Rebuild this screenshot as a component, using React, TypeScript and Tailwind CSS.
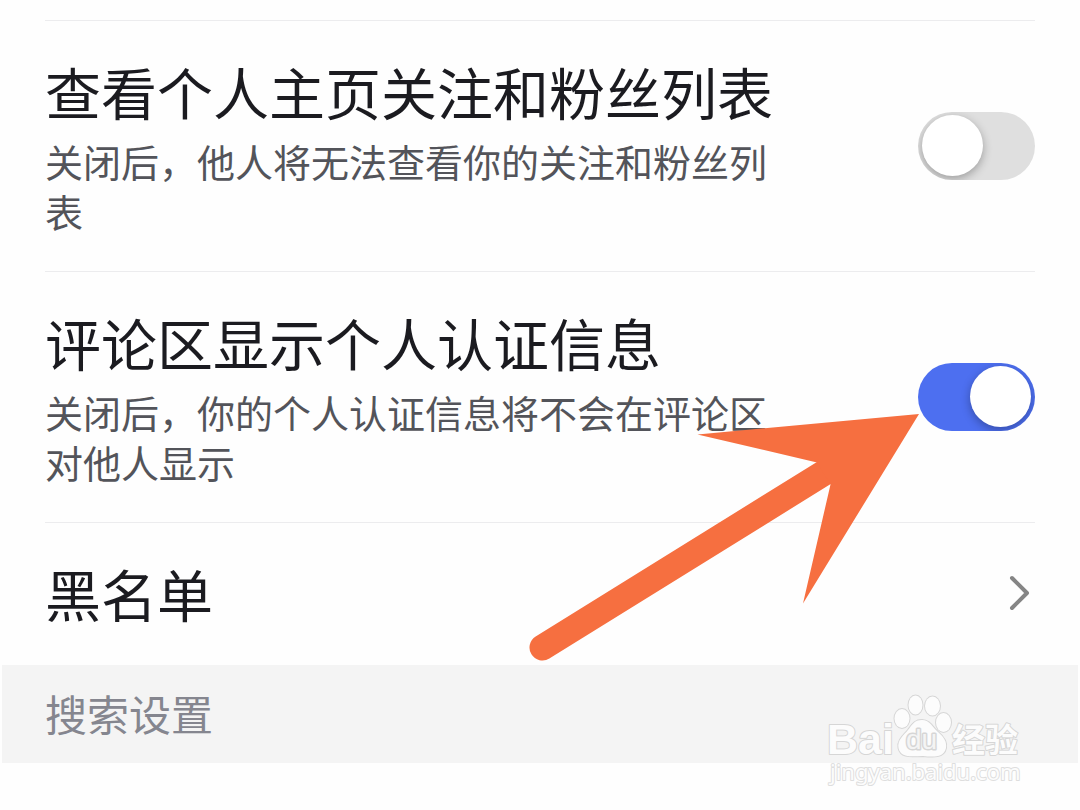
import { useState } from "react";

interface PrivacySetting {
  id: string;
  title: string;
  description: string;
  enabled: boolean;
}

const initialSettings: PrivacySetting[] = [
  {
    id: "follow-list",
    title: "查看个人主页关注和粉丝列表",
    description: "关闭后，他人将无法查看你的关注和粉丝列表",
    enabled: false,
  },
  {
    id: "verified-info",
    title: "评论区显示个人认证信息",
    description: "关闭后，你的个人认证信息将不会在评论区对他人显示",
    enabled: true,
  },
];

function SettingRow({ setting, onToggle }: { setting: PrivacySetting; onToggle: (id: string) => void }) {
  return (
    <li className="flex items-center gap-32 border-t border-[#ececee] pt-[34px] pb-[35px]">
      <div className="flex-1">
        <label htmlFor={setting.id} className="block text-[56px] leading-[72px] text-[#1b1b20]">
          {setting.title}
        </label>
        <p id={`${setting.id}-desc`} className="mt-[9px] text-[38px] leading-[50px] text-[#53545a]">
          {setting.description}
        </p>
      </div>
      <input
        id={setting.id}
        type="checkbox"
        role="switch"
        aria-describedby={`${setting.id}-desc`}
        checked={setting.enabled}
        onChange={() => onToggle(setting.id)}
        className="flex h-[68px] w-[117px] shrink-0 cursor-pointer appearance-none items-center overflow-hidden rounded-full bg-[#dfdfdf] px-1 before:block before:size-[61px] before:rounded-full before:bg-white before:shadow-[0_3px_10px_rgba(0,0,0,0.3)] before:content-[''] checked:justify-end checked:bg-[#4d6ff0]"
      />
    </li>
  );
}

function Arrow() {
  return (
    <svg
      className="pointer-events-none absolute top-[412px] right-[160px] z-10"
      width="392"
      height="252"
      viewBox="0 0 392 252"
      aria-hidden="true"
    >
      <line x1="14.5" y1="235.5" x2="320" y2="46" stroke="#f66f40" strokeWidth="26" strokeLinecap="round" />
      <path d="M391 2L169.5 22.5L289 50.5L302.5 72.5L275 191.5Z" fill="#f66f40" />
    </svg>
  );
}

function Watermark() {
  return (
    <svg
      className="pointer-events-none absolute top-[27px] right-[49px]"
      width="203"
      height="100"
      viewBox="0 0 203 100"
      role="img"
      aria-label="Baidu 经验"
    >
      <g fill="#fcfcfc" stroke="#d6d6d6" strokeWidth="2" paintOrder="stroke" strokeLinejoin="round">
        <text x="1" y="62" fontSize="43" fontWeight="700" fontFamily="Liberation Sans, sans-serif">
          Bai
        </text>
        <ellipse cx="76" cy="26.5" rx="7.5" ry="9.5" />
        <ellipse cx="89.500" cy="13" rx="7" ry="9.5" />
        <ellipse cx="106.500" cy="14" rx="7.5" ry="9.5" />
        <ellipse cx="117.500" cy="30.5" rx="7.5" ry="9.5" />
        <path d="M96 28C104 28 107 36 112 40C118 45 121 50 120 56C118 66 107 65 97 64C87 64 75 67 72.5 56C71 48 78 43 82 38C86 33 88 28 96 28Z" />
        <text x="80" y="57" fontSize="28" fill="#f4f4f4" strokeWidth="3" fontFamily="Liberation Sans, sans-serif">
          du
        </text>
        <text x="126" y="60" fontSize="33" fontWeight="700" fontFamily="Noto Sans CJK SC, sans-serif">
          经验
        </text>
        <text x="4" y="88" fontSize="22" stroke="#dedede" fontFamily="Noto Sans, sans-serif">
          jingyan.baidu.com
        </text>
      </g>
    </svg>
  );
}

export default function App() {
  const [settings, setSettings] = useState(initialSettings);

  const toggleSetting = (id: string) => {
    setSettings(settings.map((s) => (s.id === id ? { ...s, enabled: !s.enabled } : s)));
  };

  return (
    <main className="relative min-h-screen bg-[#fefefe] pt-5 font-['Noto_Sans_CJK_SC',sans-serif]">
      <ul className="px-[45px]">
        {settings.map((setting) => (
          <SettingRow key={setting.id} setting={setting} onToggle={toggleSetting} />
        ))}
        <li className="border-t border-[#ececee]">
          <a
            href="#blacklist"
            className="flex items-center justify-between pt-[34px] pb-9 text-[56px] leading-[72px] text-[#1b1b20]"
          >
            黑名单
            <svg width="30" height="36" viewBox="0 0 30 36" fill="none" aria-hidden="true">
              <path d="M7 3L22 18L7 33" stroke="#858585" strokeWidth="4" strokeLinecap="round" strokeLinejoin="round" />
            </svg>
          </a>
        </li>
      </ul>
      <section className="relative mx-0.5 bg-[#f4f4f4] px-[43px] pt-[18px] pb-5">
        <h2 className="text-[42px] leading-[60px] text-[#85868f]">搜索设置</h2>
        <Watermark />
      </section>
      <Arrow />
    </main>
  );
}
